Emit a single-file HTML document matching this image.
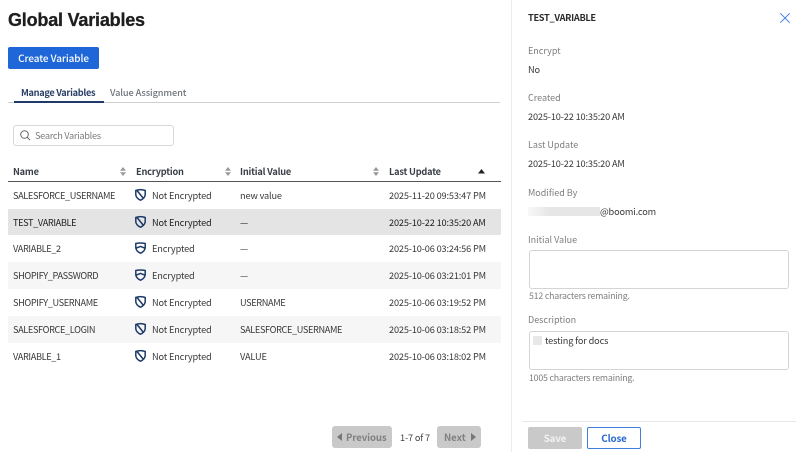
<!DOCTYPE html>
<html><head><meta charset="utf-8"><style>
html,body{margin:0;padding:0;width:800px;height:452px;overflow:hidden;background:#fff}
body{position:relative;font-family:"Noto Sans CJK JP","Liberation Sans",sans-serif;font-size:9.2px;letter-spacing:-.15px;color:#3a3a3a;filter:blur(.2px)}
.t{position:absolute;white-space:nowrap;line-height:14px;height:14px}
.b{position:absolute;box-sizing:border-box}
.h{font-weight:700;color:#3a3f47;letter-spacing:-.2px}
.c{letter-spacing:-.38px}
.l{color:#7d7d7d;font-size:9px;letter-spacing:0}
.s{color:#7d7d7d;font-size:8.8px;letter-spacing:-.2px}
svg{position:absolute;overflow:visible}
</style></head><body>
<div class="t" style="left:8px;top:9px;height:22px;line-height:22px;font-family:'Liberation Sans',sans-serif;font-size:18px;font-weight:bold;color:#1e1e1e;-webkit-text-stroke:.3px #1e1e1e;letter-spacing:-.2px">Global Variables</div>
<div class="b" style="left:8px;top:47px;width:91px;height:22px;background:#1f66d8;border-radius:2px;color:#fff;text-align:center;line-height:22px;font-size:10px;font-weight:500;letter-spacing:-.1px">Create Variable</div>
<div class="t" style="left:21px;top:85px;font-weight:700;color:#2a3f66;font-size:9.2px;letter-spacing:-.3px">Manage Variables</div>
<div class="t" style="left:110px;top:85px;color:#6f747c;font-size:9.2px;font-weight:500;letter-spacing:-.1px">Value Assignment</div>
<div class="b" style="left:8px;top:102px;width:492px;height:1px;background:#cfcfcf"></div>
<div class="b" style="left:14px;top:101px;width:90px;height:2px;background:#1d3a68"></div>
<div class="b" style="left:13px;top:125px;width:161px;height:21px;border:1px solid #d8d8d8;border-radius:3px"></div>
<svg style="left:20px;top:130px" width="11" height="11" viewBox="0 0 11 11" fill="none" stroke="#666" stroke-width="1"><circle cx="4.5" cy="4.5" r="3.8"/><path d="M7.3 7.3L10 10"/></svg>
<div class="t" style="left:35px;top:128px;color:#7d7d7d;letter-spacing:-.3px">Search Variables</div>

<div class="b" style="left:8px;top:181px;width:493px;height:1px;background:#555"></div>
<div class="t h" style="left:13px;top:164px">Name</div>
<div class="t h" style="left:136px;top:164px">Encryption</div>
<div class="t h" style="left:240px;top:164px">Initial Value</div>
<div class="t h" style="left:389px;top:164px">Last Update</div>
<svg style="left:120px;top:167px" width="6" height="9" viewBox="0 0 6 9" fill="#999"><path d="M3 0L6 3.7H0zM3 9L0 5.3H6z"/></svg>
<svg style="left:225px;top:167px" width="6" height="9" viewBox="0 0 6 9" fill="#999"><path d="M3 0L6 3.7H0zM3 9L0 5.3H6z"/></svg>
<svg style="left:373px;top:167px" width="6" height="9" viewBox="0 0 6 9" fill="#999"><path d="M3 0L6 3.7H0zM3 9L0 5.3H6z"/></svg>
<svg style="left:478px;top:169px" width="7" height="5" viewBox="0 0 7 5" fill="#222"><path d="M3.5 0L7 4.5H0z"/></svg>

<div class="b" style="left:8px;top:209px;width:493px;height:26px;background:#e4e4e4"></div>
<div class="b" style="left:8px;top:262px;width:493px;height:27px;background:#f6f6f6"></div>
<div class="b" style="left:8px;top:316px;width:493px;height:27px;background:#f6f6f6"></div>

<div class="t c" style="left:13px;top:188px">SALESFORCE_USERNAME</div>
<div class="t c" style="left:13px;top:215px;color:#222">TEST_VARIABLE</div>
<div class="t c" style="left:13px;top:241px">VARIABLE_2</div>
<div class="t c" style="left:13px;top:268px">SHOPIFY_PASSWORD</div>
<div class="t c" style="left:13px;top:295px">SHOPIFY_USERNAME</div>
<div class="t c" style="left:13px;top:322px">SALESFORCE_LOGIN</div>
<div class="t c" style="left:13px;top:349px">VARIABLE_1</div>

<svg style="left:135px;top:189px" width="11" height="12" viewBox="0 0 11 12" fill="none" stroke="#1d3a68" stroke-width="1.5"><path d="M.8 1.5Q5.5-.2 10.2 1.5V6Q9.5 9.5 5.5 11.2 1.5 9.5.8 6Z"/><path d="M2 1.5L8.5 9.5"/></svg>
<svg style="left:135px;top:216px" width="11" height="12" viewBox="0 0 11 12" fill="none" stroke="#1d3a68" stroke-width="1.5"><path d="M.8 1.5Q5.5-.2 10.2 1.5V6Q9.5 9.5 5.5 11.2 1.5 9.5.8 6Z"/><path d="M2 1.5L8.5 9.5"/></svg>
<svg style="left:135px;top:242px" width="11" height="12" viewBox="0 0 11 12" fill="none" stroke="#1d3a68" stroke-width="1.5"><path d="M.8 1.5Q5.5.6 10.2 1.5V6Q9.5 9.5 5.5 11.2 1.5 9.5.8 6Z"/><path d="M1 6.2L5.5 4.4 10 6.2"/></svg>
<svg style="left:135px;top:269px" width="11" height="12" viewBox="0 0 11 12" fill="none" stroke="#1d3a68" stroke-width="1.5"><path d="M.8 1.5Q5.5.6 10.2 1.5V6Q9.5 9.5 5.5 11.2 1.5 9.5.8 6Z"/><path d="M1 6.2L5.5 4.4 10 6.2"/></svg>
<svg style="left:135px;top:296px" width="11" height="12" viewBox="0 0 11 12" fill="none" stroke="#1d3a68" stroke-width="1.5"><path d="M.8 1.5Q5.5-.2 10.2 1.5V6Q9.5 9.5 5.5 11.2 1.5 9.5.8 6Z"/><path d="M2 1.5L8.5 9.5"/></svg>
<svg style="left:135px;top:323px" width="11" height="12" viewBox="0 0 11 12" fill="none" stroke="#1d3a68" stroke-width="1.5"><path d="M.8 1.5Q5.5-.2 10.2 1.5V6Q9.5 9.5 5.5 11.2 1.5 9.5.8 6Z"/><path d="M2 1.5L8.5 9.5"/></svg>
<svg style="left:135px;top:350px" width="11" height="12" viewBox="0 0 11 12" fill="none" stroke="#1d3a68" stroke-width="1.5"><path d="M.8 1.5Q5.5-.2 10.2 1.5V6Q9.5 9.5 5.5 11.2 1.5 9.5.8 6Z"/><path d="M2 1.5L8.5 9.5"/></svg>

<div class="t" style="left:152px;top:188px">Not Encrypted</div>
<div class="t" style="left:152px;top:215px;color:#222">Not Encrypted</div>
<div class="t" style="left:152px;top:241px">Encrypted</div>
<div class="t" style="left:152px;top:268px">Encrypted</div>
<div class="t" style="left:152px;top:295px">Not Encrypted</div>
<div class="t" style="left:152px;top:322px">Not Encrypted</div>
<div class="t" style="left:152px;top:349px">Not Encrypted</div>

<div class="t" style="left:240px;top:188px">new value</div>
<div class="t" style="left:240px;top:215px;color:#222">—</div>
<div class="t" style="left:240px;top:241px">—</div>
<div class="t" style="left:240px;top:268px">—</div>
<div class="t c" style="left:240px;top:295px">USERNAME</div>
<div class="t c" style="left:240px;top:322px">SALESFORCE_USERNAME</div>
<div class="t" style="left:240px;top:349px">VALUE</div>

<div class="t" style="left:389px;top:188px">2025-11-20 09:53:47 PM</div>
<div class="t" style="left:389px;top:215px;color:#222">2025-10-22 10:35:20 AM</div>
<div class="t" style="left:389px;top:241px">2025-10-06 03:24:56 PM</div>
<div class="t" style="left:389px;top:268px">2025-10-06 03:21:01 PM</div>
<div class="t" style="left:389px;top:295px">2025-10-06 03:19:52 PM</div>
<div class="t" style="left:389px;top:322px">2025-10-06 03:18:52 PM</div>
<div class="t" style="left:389px;top:349px">2025-10-06 03:18:02 PM</div>

<div class="b" style="left:332px;top:426px;width:60px;height:22px;background:#c9c9c9;border-radius:3px"></div>
<svg style="left:337px;top:433px" width="5" height="8" viewBox="0 0 5 8" fill="#777"><path d="M5 0V8L0 4z"/></svg>
<div class="t" style="left:346px;top:430px;color:#808080;font-weight:700;font-size:9.6px;letter-spacing:-.1px">Previous</div>
<div class="t" style="left:400px;top:430px;color:#444">1-7 of 7</div>
<div class="b" style="left:437px;top:426px;width:44px;height:22px;background:#c9c9c9;border-radius:3px"></div>
<div class="t" style="left:444px;top:430px;color:#808080;font-weight:700;font-size:9.6px;letter-spacing:0">Next</div>
<svg style="left:471px;top:433px" width="5" height="8" viewBox="0 0 5 8" fill="#777"><path d="M0 0V8L5 4z"/></svg>

<div class="b" style="left:511px;top:0;width:1px;height:452px;background:#ececec"></div>
<div class="t c" style="left:528px;top:10px;font-weight:700;color:#2b2b2b;letter-spacing:-.3px">TEST_VARIABLE</div>
<svg style="left:780px;top:13px" width="10" height="10" viewBox="0 0 10 10" fill="none" stroke="#3f7fdc" stroke-width="1"><path d="M.3.3L9.7 9.7M9.7.3L.3 9.7"/></svg>

<div class="t l" style="left:528px;top:44px">Encrypt</div>
<div class="t" style="left:528px;top:62px">No</div>
<div class="t l" style="left:528px;top:91px">Created</div>
<div class="t" style="left:528px;top:109px">2025-10-22 10:35:20 AM</div>
<div class="t l" style="left:528px;top:138px">Last Update</div>
<div class="t" style="left:528px;top:156px">2025-10-22 10:35:20 AM</div>
<div class="t l" style="left:528px;top:186px">Modified By</div>
<div class="b" style="left:528px;top:207px;width:72px;height:9px;background:linear-gradient(90deg,#f8f8f8,#e6e6e6 30%,#e6e6e6 100%)"></div>
<div class="t" style="left:600px;top:204px">@boomi.com</div>
<div class="t l" style="left:528px;top:233px">Initial Value</div>
<div class="b" style="left:529px;top:250px;width:260px;height:39px;border:1px solid #d4d4d4;border-radius:3px"></div>
<div class="t s" style="left:529px;top:289px">512 characters remaining.</div>
<div class="t l" style="left:528px;top:313px">Description</div>
<div class="b" style="left:529px;top:331px;width:260px;height:39px;border:1px solid #d4d4d4;border-radius:3px"></div>
<div class="b" style="left:533px;top:336px;width:9px;height:9px;background:#e8e8e8"></div>
<div class="t" style="left:545px;top:333px">testing for docs</div>
<div class="t s" style="left:529px;top:371px">1005 characters remaining.</div>
<div class="b" style="left:523px;top:421px;width:273px;height:1px;background:#e6e6e6"></div>
<div class="b" style="left:528px;top:427px;width:54px;height:22px;background:#c9c9c9;border-radius:2px;color:#f2f2f2;font-weight:700;text-align:center;line-height:22px;font-size:9.8px">Save</div>
<div class="b" style="left:587px;top:427px;width:54px;height:22px;border:1px solid #3f7fdc;border-radius:2px;color:#2a6ad6;font-weight:700;text-align:center;line-height:20px;font-size:9.8px">Close</div>
</body></html>
